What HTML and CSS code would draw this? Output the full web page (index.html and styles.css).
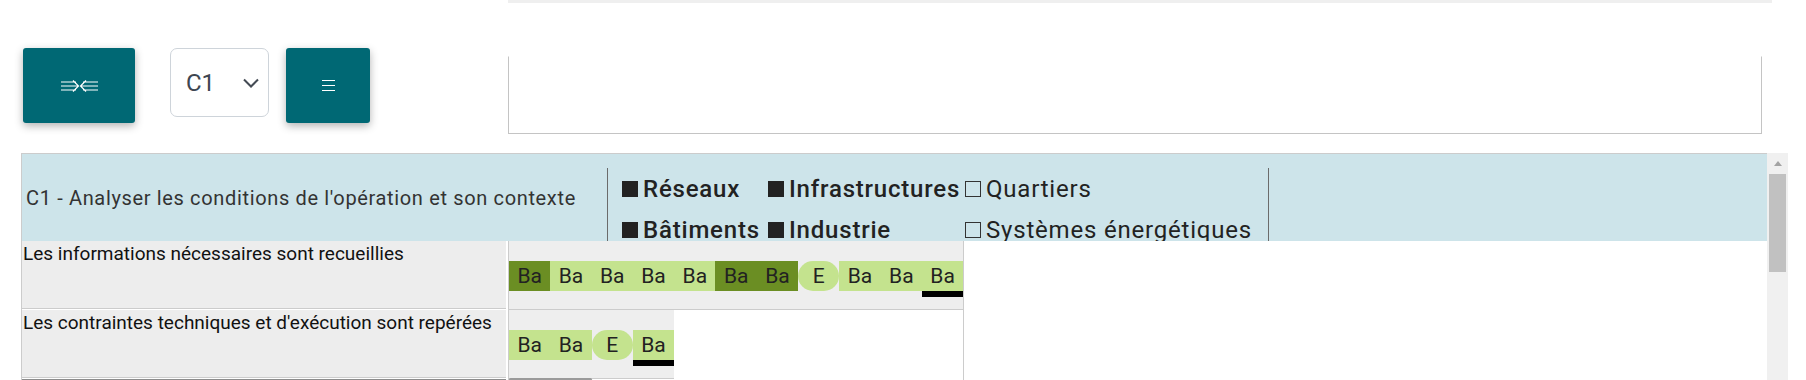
FILE: index.html
```html
<!DOCTYPE html>
<html lang="fr">
<head>
    <meta charset="UTF-8">
    <meta name="viewport" content="width=device-width, initial-scale=1.0">
    <title>Grille d'évaluation</title>
    <link rel="stylesheet" href="styles.css">
</head>
<body>
    <div class="top">
        <div class="toolbar">
            <button class="btn btn-wide" type="button" title="Replier">
                <svg width="37" height="12" viewBox="0 0 37 12" fill="none" stroke="#fff" stroke-width="1.2">
                    <path d="M0 2H15M0 6H17M0 10H15M12 0.5L17.5 6L12 11.5"/>
                    <path d="M37 2H22M37 6H20M37 10H22M25 0.5L19.5 6L25 11.5"/>
                </svg>
            </button>
            <div class="select">
                <span>C1</span>
                <svg width="16" height="10" viewBox="0 0 16 10" fill="none" stroke="#444b54" stroke-width="2">
                    <path d="M1 1.5L8 8.5L15 1.5"/>
                </svg>
            </div>
            <button class="btn btn-menu" type="button" title="Menu">
                <svg width="13" height="11" viewBox="0 0 13 11" stroke="#fff" stroke-width="1.2">
                    <path d="M0 0.5H13M0 5.5H13M0 10.5H13"/>
                </svg>
            </button>
        </div>
        <div class="notes">
            <div class="notes-strip"></div>
            <textarea class="notes-box"></textarea>
        </div>
    </div>

    <div class="grid-wrap">
        <div class="grid">
            <div class="grid-head">
                <div class="head-title">C1 - Analyser les conditions de l'opération et son contexte</div>
                <div class="head-cats">
                    <span class="cat on">Réseaux</span>
                    <span class="cat on">Infrastructures</span>
                    <span class="cat">Quartiers</span>
                    <span class="cat on">Bâtiments</span>
                    <span class="cat on">Industrie</span>
                    <span class="cat">Systèmes énergétiques</span>
                </div>
                <div class="head-rest"></div>
            </div>

            <div class="row">
                <div class="row-label">Les informations nécessaires sont recueillies</div>
                <div class="row-chips">
                    <div class="chips">
                        <span class="chip dark">Ba</span>
                        <span class="chip">Ba</span>
                        <span class="chip">Ba</span>
                        <span class="chip">Ba</span>
                        <span class="chip">Ba</span>
                        <span class="chip dark">Ba</span>
                        <span class="chip dark">Ba</span>
                        <span class="chip pill">E</span>
                        <span class="chip">Ba</span>
                        <span class="chip">Ba</span>
                        <span class="chip last">Ba</span>
                    </div>
                </div>
                <div class="row-rest"></div>
            </div>

            <div class="row">
                <div class="row-label">Les contraintes techniques et d'exécution sont repérées</div>
                <div class="row-chips">
                    <div class="chips">
                        <span class="chip">Ba</span>
                        <span class="chip">Ba</span>
                        <span class="chip pill">E</span>
                        <span class="chip last">Ba</span>
                    </div>
                </div>
                <div class="row-rest"></div>
            </div>

            <div class="row row-next">
                <div class="row-label"></div>
                <div class="row-chips">
                    <div class="next-bar"></div>
                </div>
                <div class="row-rest"></div>
            </div>
        </div>
        <div class="fake-scroll">
            <div class="scroll-up"></div>
            <div class="scroll-thumb"></div>
        </div>
    </div>
</body>
</html>
```

FILE: styles.css
```css
* {
    box-sizing: border-box;
}
body {
    margin: 0;
    font-family: Roboto, "Liberation Sans", sans-serif;
    color: #222;
    background: #fff;
    overflow: hidden;
}

/* top bar: tools + notes */
.top {
    display: flex;
}
.toolbar {
    display: flex;
    align-items: flex-start;
    width: 508px;
    padding: 48px 0 0 23px;
}
.btn {
    display: flex;
    align-items: center;
    justify-content: center;
    height: 75px;
    padding: 0;
    border: none;
    border-radius: 3px;
    background: #006874;
    box-shadow: 0 3px 8px rgba(0, 0, 0, 0.3);
    cursor: pointer;
}
.btn-wide {
    width: 112px;
}
.btn-menu {
    width: 84px;
}
.select {
    display: flex;
    align-items: center;
    justify-content: space-between;
    width: 99px;
    height: 69px;
    margin: 0 17px 0 35px;
    padding: 0 9px 0 15px;
    border: 1px solid #ced4da;
    border-radius: 7px;
    font-size: 24px;
    color: #3d4651;
}
.notes {
    flex: 1;
}
.notes-strip {
    height: 3px;
    margin-right: 34px;
    background: #efefef;
}
.notes-box {
    display: block;
    width: calc(100% - 44px);
    height: 78px;
    margin-top: 53px;
    border: 1px solid #c4c4c4;
    border-top-color: transparent;
    resize: none;
}

/* evaluation grid */
.grid-wrap {
    display: flex;
    height: 240px;
    margin: 19px 18px 0 21px;
}
.grid {
    flex: 1;
    overflow: hidden;
    border-top: 1px solid #ccc;
    border-left: 1px solid #ccc;
}
.grid-head {
    display: flex;
    height: 87px;
    overflow: hidden;
    background: #cde4ea;
}
.head-title {
    display: flex;
    align-items: center;
    width: 585px;
    padding-left: 4px;
    font-size: 20px;
    letter-spacing: 0.65px;
    color: #333;
}
.head-cats {
    display: grid;
    grid-template-columns: 146px 197px auto;
    grid-auto-rows: 41px;
    align-items: center;
    align-content: start;
    width: 661px;
    height: 110px;
    margin-top: 14px;
    padding-left: 14px;
    border-left: 1px solid #6b6b6b;
}
.head-rest {
    flex: 1;
    margin-top: 14px;
    border-left: 1px solid #6b6b6b;
}
.cat {
    display: flex;
    align-items: center;
    font-size: 24px;
    letter-spacing: 0.8px;
    white-space: nowrap;
}
.cat::before {
    content: "";
    flex: none;
    width: 14px;
    height: 14px;
    margin-right: 5px;
    border: 1.5px solid #333;
}
.cat.on {
    font-weight: 500;
}
.cat.on::before {
    background: #222;
    border-color: #222;
}

.row {
    display: flex;
    height: 69px;
}
.row-label {
    width: 484px;
    height: 68px;
    padding: 2px 0 0 1px;
    border-bottom: 1px solid #ccc;
    background: #ededed;
    font-size: 19px;
    line-height: 22px;
    color: #111;
}
.row-chips {
    width: 456px;
    margin-left: 2px;
    border-left: 1px solid #ccc;
    border-right: 1px solid #ccc;
}
.row-rest {
    flex: 1;
}
.chips {
    display: inline-flex;
    align-items: flex-start;
    height: 69px;
    padding-top: 20px;
    border-bottom: 1px solid #ccc;
    background: #eee;
    vertical-align: top;
}
.chip {
    display: flex;
    align-items: center;
    justify-content: center;
    width: 41.3px;
    height: 30px;
    background: #c4e38e;
    font-size: 21px;
}
.chip.dark {
    background: #6b8e23;
}
.chip.pill {
    border-radius: 15px;
}
.chip.last {
    box-shadow: 0 6px 0 #000;
}
.row-next .row-label {
    border-top: 2px solid #8c8c8c;
}
.next-bar {
    width: 83px;
    height: 3px;
    margin-top: -1px;
    border-radius: 2px;
    background: #9a9a9a;
}

/* scrollbar of the grid */
.fake-scroll {
    width: 21px;
    background: #f0f0f0;
}
.scroll-up {
    display: flex;
    align-items: center;
    justify-content: center;
    height: 21px;
}
.scroll-up::before {
    content: "";
    border-left: 4.5px solid transparent;
    border-right: 4.5px solid transparent;
    border-bottom: 5px solid #a3a3a3;
}
.scroll-thumb {
    height: 98px;
    margin: 0 2px;
    background: #c1c1c1;
}
```
